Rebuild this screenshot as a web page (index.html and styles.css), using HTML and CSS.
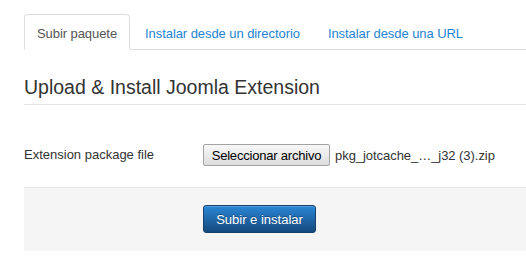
FILE: index.html
```html
<!DOCTYPE html>
<html lang="es">

<head>
    <meta charset="UTF-8">
    <meta name="viewport" content="width=device-width, initial-scale=1.0">
    <title>Instalar extensiones</title>
    <link rel="stylesheet" href="styles.css">
</head>

<body>
    <div class="page">
        <!-- pestañas -->
        <ul class="tabs">
            <li class="tab active"><a href="#">Subir paquete</a></li>
            <li class="tab"><a href="#">Instalar desde un directorio</a></li>
            <li class="tab"><a href="#">Instalar desde una URL</a></li>
        </ul>

        <h2 class="title">Upload &amp; Install Joomla Extension</h2>

        <div class="control-group">
            <label class="control-label">Extension package file</label>
            <div class="controls">
                <button type="button" class="file-btn">Seleccionar archivo</button>
                <span class="file-name">pkg_jotcache_…_j32 (3).zip</span>
            </div>
        </div>

        <div class="form-actions">
            <button type="button" class="btn-primary">Subir e instalar</button>
        </div>
    </div>
</body>

</html>
```

FILE: styles.css
```css
html,
body {
    margin: 0;
    background: #fff;
    overflow: hidden;
}

body {
    font-family: "Liberation Sans", Arial, sans-serif;
    font-size: 13px;
    color: #333;
}

.page {
    padding: 14px 0 0 24px;
}

.tabs {
    display: flex;
    margin: 0;
    padding: 0;
    list-style: none;
    border-bottom: 1px solid #ddd;
}

.tab {
    margin-bottom: -1px;
    margin-right: 2px;
}

.tab a {
    display: block;
    padding: 10px 12px 6px;
    line-height: 18px;
    letter-spacing: -0.07px;
    border: 1px solid transparent;
    border-radius: 4px 4px 0 0;
    color: #2384d3;
    text-decoration: none;
}

.tab.active a {
    color: #555;
    background: #fff;
    border-color: #ddd;
    border-bottom-color: #fff;
}

.title {
    margin: 25px 0 0;
    padding-bottom: 5px;
    font-size: 19.5px;
    font-weight: normal;
    line-height: 24px;
    color: #333;
    border-bottom: 1px solid #e5e5e5;
}

.control-group {
    display: flex;
    align-items: center;
    margin-top: 39px;
    height: 22px;
}

.control-label {
    width: 179px;
    line-height: 22px;
    color: #333;
}

.controls {
    display: flex;
    align-items: center;
    gap: 5px;
}

.file-btn {
    width: 127px;
    height: 22px;
    padding: 0;
    font-family: "Liberation Sans", Arial, sans-serif;
    font-size: 13px;
    letter-spacing: -0.2px;
    color: #000;
    background: linear-gradient(#f8f8f8, #dddddd);
    border: 1px solid #a3a3a3;
    border-radius: 2px;
}

.file-name {
    color: #333;
    letter-spacing: -0.05px;
}

.form-actions {
    margin-top: 21px;
    padding: 17px 0 18px 179px;
    background: #f5f5f5;
    border-top: 1px solid #e5e5e5;
}

.btn-primary {
    display: block;
    width: 113px;
    height: 28px;
    padding: 0;
    font-family: "Liberation Sans", Arial, sans-serif;
    font-size: 13px;
    color: #fff;
    text-shadow: 0 -1px 0 rgba(0, 0, 0, 0.3);
    background: linear-gradient(#2a86d6, #154a7e);
    border: 1px solid #17406b;
    border-radius: 3px;
    box-shadow: inset 0 1px 0 rgba(255, 255, 255, 0.2);
}
```
